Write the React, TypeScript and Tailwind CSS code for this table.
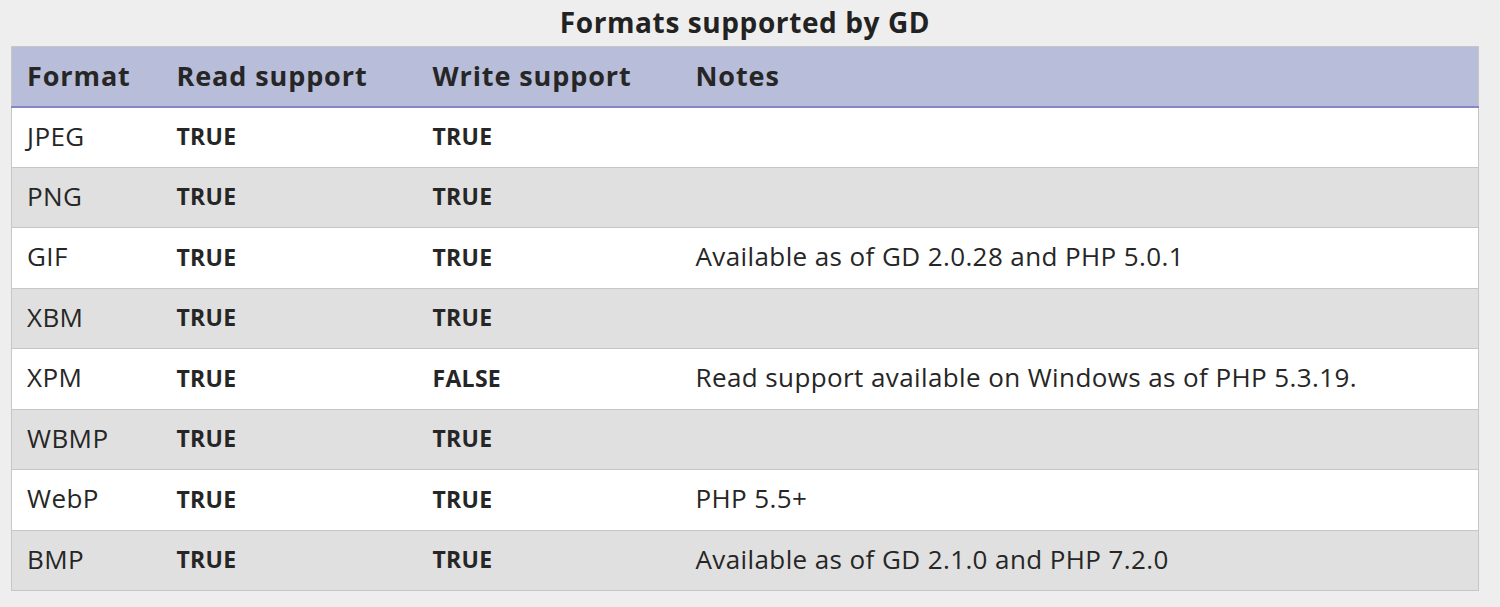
import React from 'react';

const ROWS: [string, string, string, string][] = [
  ['JPEG', 'TRUE', 'TRUE', ''],
  ['PNG', 'TRUE', 'TRUE', ''],
  ['GIF', 'TRUE', 'TRUE', 'Available as of GD 2.0.28 and PHP 5.0.1'],
  ['XBM', 'TRUE', 'TRUE', ''],
  ['XPM', 'TRUE', 'FALSE', 'Read support available on Windows as of PHP 5.3.19.'],
  ['WBMP', 'TRUE', 'TRUE', ''],
  ['WebP', 'TRUE', 'TRUE', 'PHP 5.5+'],
  ['BMP', 'TRUE', 'TRUE', 'Available as of GD 2.1.0 and PHP 7.2.0'],
];

const App: React.FC = () => {
  return (
    <div
      className="w-[1500px] h-[607px] bg-[#eeeeee] text-[#262626] pl-[11px] pr-[21px]"
      style={{ fontFamily: '"Open Sans", "Noto Sans", sans-serif' }}
    >
      <table className="w-full border-collapse border border-[#c6c6c6]">
        <caption className="h-[46px] pt-[5px] text-[28px] font-bold leading-[34px] tracking-[0.6px] text-[#222]">
          Formats supported by GD
        </caption>
        <thead>
          <tr className="h-[60px] bg-[#b8bdd9] border-b-2 border-[#8489c4] text-left text-[27px] font-bold tracking-[0.9px]">
            <th className="w-[150px] pl-[15px] font-bold">Format</th>
            <th className="w-[256px] pl-[15px] font-bold">Read support</th>
            <th className="w-[263px] pl-[15px] font-bold">Write support</th>
            <th className="pl-[15px] font-bold">Notes</th>
          </tr>
        </thead>
        <tbody>
          {ROWS.map(([fmt, read, write, notes], i) => (
            <tr
              key={fmt}
              className={`h-[60.5px] border-t border-[#c6c6c6] text-[26px] tracking-[0.4px] ${
                i % 2 === 0 ? 'bg-white' : 'bg-[#e0e0e0]'
              }`}
            >
              <td className="pl-[15px] pb-[2px]">{fmt}</td>
              <td className="pl-[15px] pb-[2px] text-[23px] font-bold tracking-[0.3px]">{read}</td>
              <td className="pl-[15px] pb-[2px] text-[23px] font-bold tracking-[0.3px]">{write}</td>
              <td className="pl-[15px] pb-[2px]">{notes}</td>
            </tr>
          ))}
        </tbody>
      </table>
    </div>
  );
};

export default App;
